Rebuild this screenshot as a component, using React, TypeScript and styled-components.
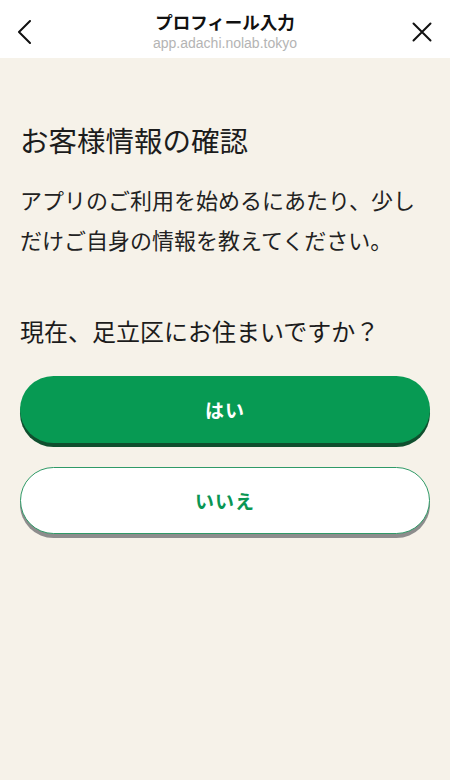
import React from 'react';
import styled, { createGlobalStyle } from 'styled-components';

const GlobalStyle = createGlobalStyle`
	html, body {
		margin: 0;
		padding: 0;
		background: #f6f2e9;
	}
	body {
		font-family: 'Noto Sans CJK JP', 'Noto Sans', sans-serif;
		color: #1c1c1c;
	}
	* {
		box-sizing: border-box;
	}
`;

const App = () => {
	return (
		<>
			<GlobalStyle />
			<Page>
				<Header>
					<IconButton aria-label="戻る">
						<svg width="14" height="24" viewBox="0 0 14 24" fill="none">
							<path d="M13 1L2 12l11 11" stroke="#111" strokeWidth="2" strokeLinecap="round" strokeLinejoin="round" />
						</svg>
					</IconButton>
					<TitleBlock>
						<Title>プロフィール入力</Title>
						<Url>app.adachi.nolab.tokyo</Url>
					</TitleBlock>
					<IconButton aria-label="閉じる" $right>
						<svg width="20" height="20" viewBox="0 0 20 20" fill="none">
							<path d="M1.5 1.5l17 17M18.5 1.5l-17 17" stroke="#111" strokeWidth="2" strokeLinecap="round" />
						</svg>
					</IconButton>
				</Header>
				<Content>
					<Heading>お客様情報の確認</Heading>
					<Lead>アプリのご利用を始めるにあたり、少しだけご自身の情報を教えてください。</Lead>
					<Question>現在、足立区にお住まいですか？</Question>
					<Choices>
						<Choice $primary>はい</Choice>
						<Choice>いいえ</Choice>
					</Choices>
				</Content>
			</Page>
		</>
	);
};

const Page = styled.div`
	min-height: 100vh;
	display: flex;
	flex-direction: column;
	background: #f6f2e9;
`;

const Header = styled.div`
	display: grid;
	grid-template-columns: 56px 1fr 56px;
	align-items: center;
	height: 58px;
	background: #ffffff;
`;

const IconButton = styled.div<{ $right?: boolean }>`
	display: flex;
	align-items: center;
	justify-content: ${(p) => (p.$right ? 'flex-end' : 'flex-start')};
	padding: ${(p) => (p.$right ? '6px 18px 0 0' : '6px 0 0 17px')};
	height: 100%;
`;

const TitleBlock = styled.div`
	display: flex;
	flex-direction: column;
	align-items: center;
	padding-top: 4px;
`;

const Title = styled.div`
	font-size: 17.5px;
	font-weight: 700;
	line-height: 22px;
	color: #111;
`;

const Url = styled.div`
	font-family: 'Liberation Sans', Arial, sans-serif;
	font-size: 14px;
	line-height: 18px;
	color: #b4b4b4;
	margin-top: 1px;
`;

const Content = styled.div`
	display: flex;
	flex-direction: column;
	padding: 62px 20px 40px;
`;

const Heading = styled.h1`
	margin: 0;
	font-size: 28.5px;
	font-weight: 400;
	line-height: 40px;
	color: #1c1c1c;
`;

const Lead = styled.p`
	margin: 19px 0 0;
	font-size: 22px;
	font-weight: 400;
	line-height: 40px;
	color: #222;
`;

const Question = styled.p`
	margin: 54px 0 0;
	font-size: 24px;
	font-weight: 400;
	line-height: 36px;
	color: #1c1c1c;
`;

const Choices = styled.div`
	display: flex;
	flex-direction: column;
	gap: 24px;
	margin-top: 27px;
`;

const Choice = styled.button<{ $primary?: boolean }>`
	display: flex;
	align-items: center;
	justify-content: center;
	width: 100%;
	height: 67px;
	border-radius: 34px;
	font-family: 'Noto Sans CJK JP', 'Noto Sans', sans-serif;
	font-size: 19px;
	font-weight: 700;
	letter-spacing: 1px;
	cursor: pointer;
	background: ${(p) => (p.$primary ? '#079a53' : '#ffffff')};
	color: ${(p) => (p.$primary ? '#ffffff' : '#0a9653')};
	border: ${(p) => (p.$primary ? 'none' : '1.5px solid #2f9a67')};
	box-shadow: ${(p) => (p.$primary ? '0 4px 0 #0f4f2e' : '0 4px 0 #8d8d8d')};
`;

export default App;
